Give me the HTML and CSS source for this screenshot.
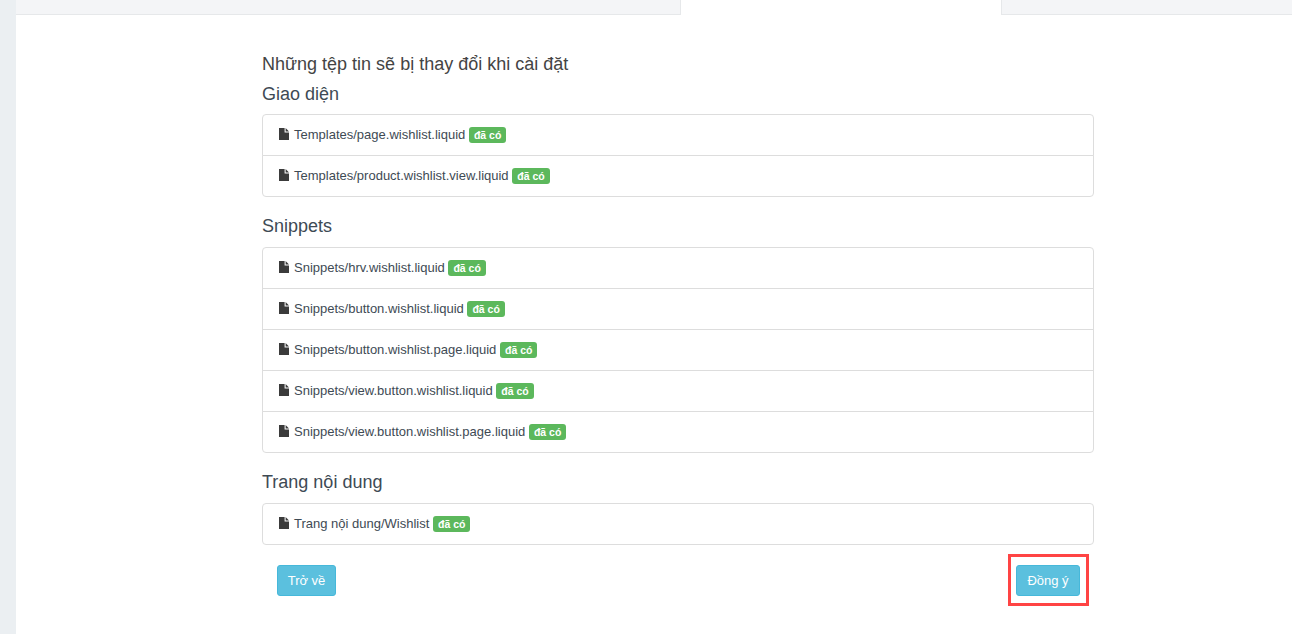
FILE: index.html
```html
<!DOCTYPE html>
<html lang="vi">
<head>
<meta charset="utf-8">
<title>Wishlist</title>
<link rel="stylesheet" href="styles.css">
</head>
<body>
<svg class="defs" width="0" height="0"><symbol id="file" viewBox="0 0 10 12"><path d="M0 0H5.6V4.4H10V12H0Z"/><path d="M6.6 0L10 3.4H6.6Z"/></symbol></svg>
<aside class="rail"></aside>
<main class="main">
  <nav class="tabs">
    <div class="tab-off tab-left"></div>
    <div class="tab-on"></div>
    <div class="tab-off tab-right"></div>
  </nav>
  <section class="content">
    <h4 class="title">Những tệp tin sẽ bị thay đổi khi cài đặt</h4>
    <h4 class="group">Giao diện</h4>
    <ul class="list">
      <li class="item"><svg class="ico"><use href="#file"/></svg>Templates/page.wishlist.liquid <span class="badge">đã có</span></li>
      <li class="item"><svg class="ico"><use href="#file"/></svg>Templates/product.wishlist.view.liquid <span class="badge">đã có</span></li>
    </ul>
    <h4 class="group">Snippets</h4>
    <ul class="list">
      <li class="item"><svg class="ico"><use href="#file"/></svg>Snippets/hrv.wishlist.liquid <span class="badge">đã có</span></li>
      <li class="item"><svg class="ico"><use href="#file"/></svg>Snippets/button.wishlist.liquid <span class="badge">đã có</span></li>
      <li class="item"><svg class="ico"><use href="#file"/></svg>Snippets/button.wishlist.page.liquid <span class="badge">đã có</span></li>
      <li class="item"><svg class="ico"><use href="#file"/></svg>Snippets/view.button.wishlist.liquid <span class="badge">đã có</span></li>
      <li class="item"><svg class="ico"><use href="#file"/></svg>Snippets/view.button.wishlist.page.liquid <span class="badge">đã có</span></li>
    </ul>
    <h4 class="group">Trang nội dung</h4>
    <ul class="list">
      <li class="item"><svg class="ico"><use href="#file"/></svg>Trang nội dung/Wishlist <span class="badge">đã có</span></li>
    </ul>
    <div class="actions">
      <button class="btn btn-back" type="button">Trở về</button>
      <div class="confirm">
        <button class="btn btn-ok" type="button">Đồng ý</button>
        <span class="highlight"></span>
      </div>
    </div>
  </section>
</main>
</body>
</html>
```
FILE: styles.css
```css
* { box-sizing: border-box; }
html, body { height: 100%; }
body {
  margin: 0;
  display: flex;
  overflow: hidden;
  background: #fff;
  color: #3e4a54;
  font: 13px/20px "Liberation Sans", Arial, sans-serif;
}
.defs { position: absolute; }
.rail { width: 16px; flex: none; background: #ebeff2; }
.main { flex: 1; min-width: 0; }
.tabs { display: flex; height: 15px; }
.tab-off { background: #f4f5f7; border-bottom: 1px solid #e6e8ea; }
.tab-left { width: 665px; border-right: 1px solid #e6e8ea; }
.tab-on { width: 320px; background: #fff; }
.tab-right { flex: 1; border-left: 1px solid #e6e8ea; }
.content { width: 832px; margin-left: 246px; padding-top: 39px; }
.title, .group {
  margin: 0;
  font-size: 18px;
  font-weight: 400;
  line-height: 20px;
  color: #3e4a54;
}
.title { margin-bottom: 10px; color: #444; }
.group { margin-bottom: 11px; }
.title + .group { margin-bottom: 10px; }
.list { list-style: none; margin: 0 0 19px; padding: 0; }
.list:last-of-type { margin-bottom: 20px; }
.item {
  height: 42px;
  margin-top: -1px;
  padding: 10px 15px;
  border: 1px solid #ddd;
  background: #fff;
}
.item:first-child { margin-top: 0; border-radius: 4px 4px 0 0; }
.item:last-child { border-radius: 0 0 4px 4px; }
.item:only-child { border-radius: 4px; }
.ico { width: 10px; height: 12px; margin: 0 5px 0 1px; fill: #3b3b3b; vertical-align: -1px; }
.badge {
  display: inline-block;
  padding: 3px 5px;
  border-radius: 3px;
  background: #5cb85c;
  color: #fff;
  font-size: 10.5px;
  font-weight: 700;
  line-height: 10px;
  vertical-align: baseline;
}
.actions { display: flex; justify-content: space-between; padding: 0 14px 0 15px; }
.btn {
  height: 31px;
  padding: 0;
  border: 1px solid #46b8da;
  border-radius: 3px;
  background: #5bc0de;
  color: #fff;
  font: 13px/20px "Liberation Sans", Arial, sans-serif;
}
.btn-back { width: 59px; }
.btn-ok { width: 64px; }
.confirm { position: relative; display: flex; }
.highlight {
  position: absolute;
  left: -8px;
  top: -11px;
  width: 81px;
  height: 52px;
  border: 3px solid #ff4444;
}
```
